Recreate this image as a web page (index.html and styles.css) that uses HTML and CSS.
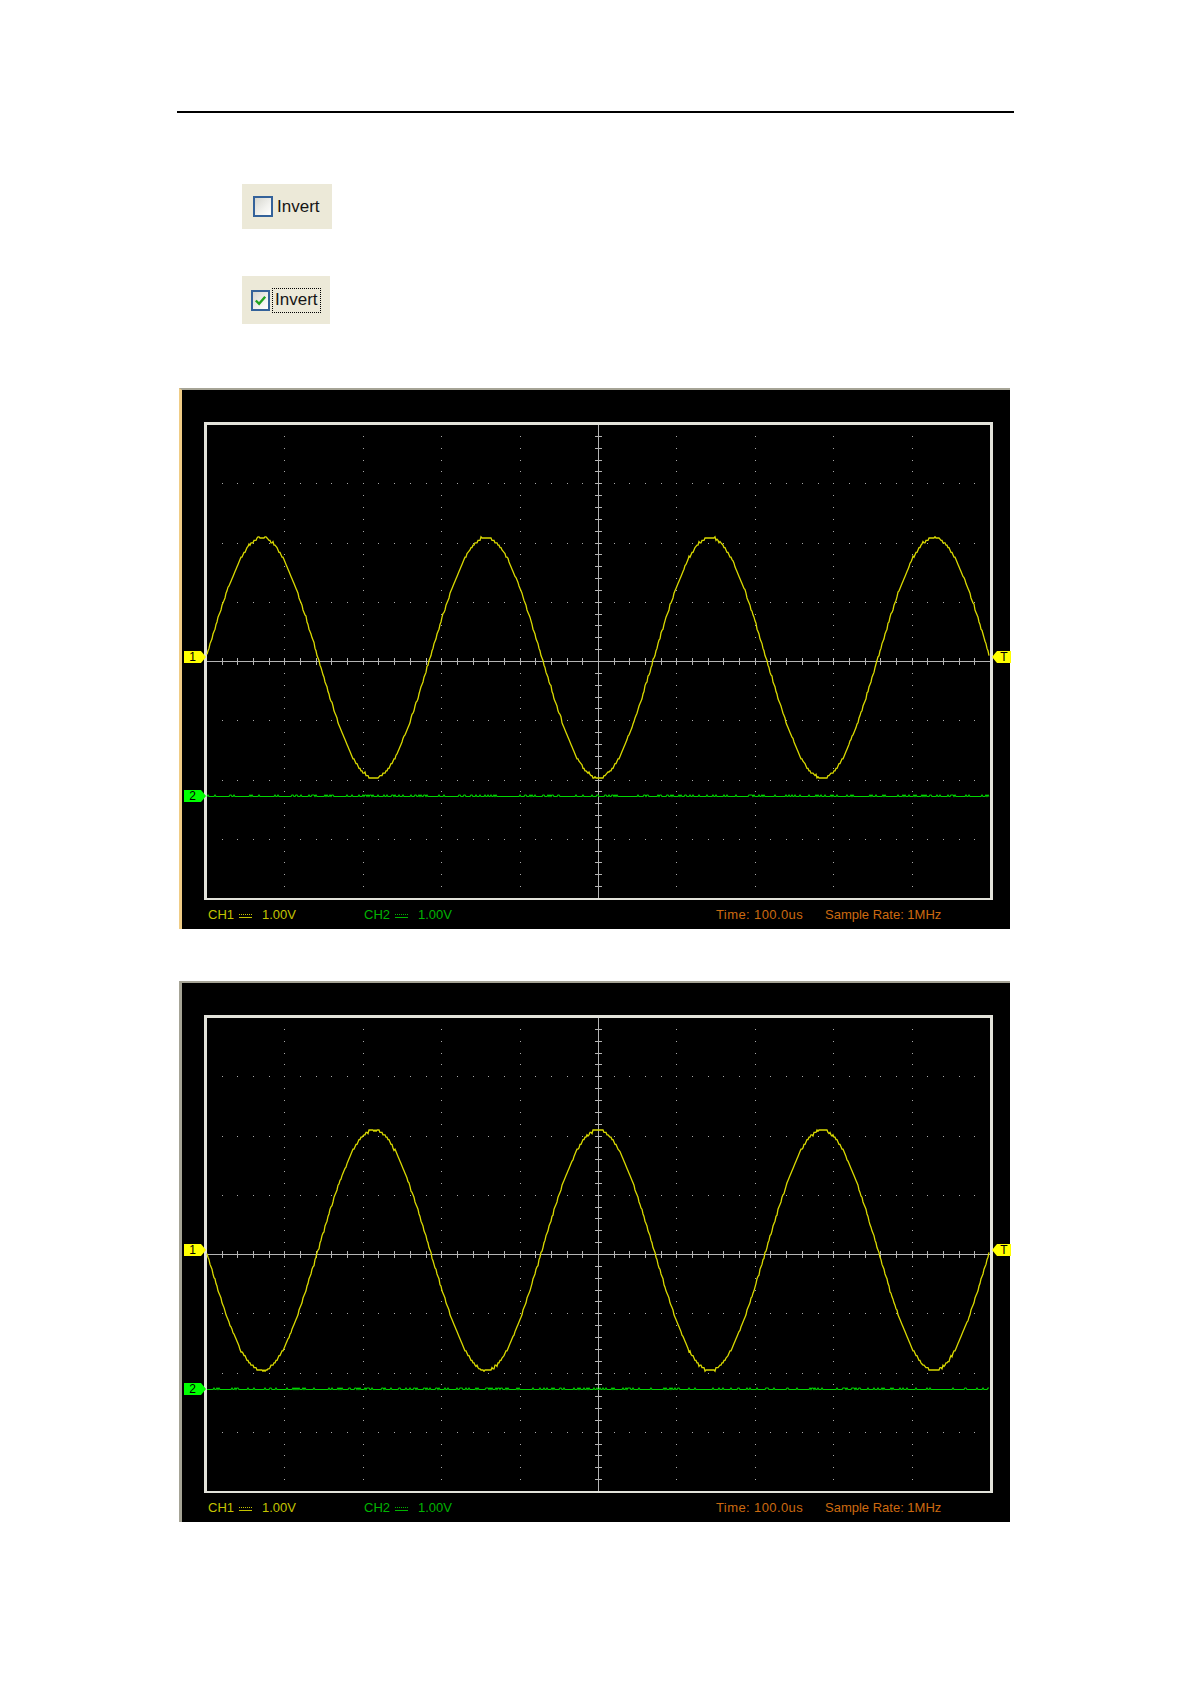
FILE: index.html
```html
<!DOCTYPE html>
<html lang="en">
<head>
    <meta charset="UTF-8">
    <title>Invert</title>
    <link rel="stylesheet" href="styles.css">
</head>
<body>
    <div class="page">
        <div class="rule"></div>

        <div class="cb-shot cb-off">
            <span class="cb-box"></span>
            <span class="cb-label">Invert</span>
        </div>

        <div class="cb-shot cb-on">
            <span class="cb-box">
                <svg width="16" height="17" viewBox="0 0 16 17"><path d="M3 8.5 L6.5 12 L13 4.5" fill="none" stroke="#22a322" stroke-width="2.6"/></svg>
            </span>
            <span class="cb-label focus">Invert</span>
        </div>

        <div class="scope scope-first" data-invert="0" data-center="268">
            <svg class="screen" width="828" height="510"></svg>
            <span class="marker marker-1">1</span>
            <span class="marker marker-2">2</span>
            <span class="marker marker-t">T</span>
            <div class="readout">
                <span class="ch ch1">CH1<i class="dc"></i>1.00V</span>
                <span class="ch ch2">CH2<i class="dc"></i>1.00V</span>
                <span class="info time">Time: 100.0us</span>
                <span class="info">Sample Rate: 1MHz</span>
            </div>
        </div>

        <div class="scope" data-invert="1" data-center="267">
            <svg class="screen" width="828" height="510"></svg>
            <span class="marker marker-1">1</span>
            <span class="marker marker-2">2</span>
            <span class="marker marker-t">T</span>
            <div class="readout">
                <span class="ch ch1">CH1<i class="dc"></i>1.00V</span>
                <span class="ch ch2">CH2<i class="dc"></i>1.00V</span>
                <span class="info time">Time: 100.0us</span>
                <span class="info">Sample Rate: 1MHz</span>
            </div>
        </div>
    </div>

    <script src="script.js"></script>
</body>
</html>
```

FILE: styles.css
```css
* {
    margin: 0;
    padding: 0;
    box-sizing: border-box;
}

body {
    background: #fff;
    font-family: 'Liberation Sans', Arial, sans-serif;
}

.page {
    padding: 111px 0 40px 177px;
}

.rule {
    width: 837px;
    height: 2px;
    background: #000;
}

/* checkbox screenshots */
.cb-shot {
    display: flex;
    align-items: center;
    margin-left: 65px;
    background: #ece9d8;
    font-size: 17px;
    color: #151515;
}

.cb-off {
    width: 90px;
    height: 45px;
    margin-top: 71px;
    padding-left: 11px;
}

.cb-on {
    width: 88px;
    height: 48px;
    margin-top: 47px;
    padding-left: 9px;
}

.cb-box {
    display: flex;
    align-items: center;
    justify-content: center;
    width: 20px;
    height: 21px;
    margin-right: 4px;
    border: 2px solid #34629a;
    background: linear-gradient(135deg, #d6d6cf 0%, #f2f2ee 60%, #ffffff 100%);
}

.cb-on .cb-box {
    width: 19px;
    margin-right: 3px;
}

.focus {
    padding: 1px 2px 2px 2px;
    outline: 1px dotted #000;
    line-height: 20px;
}

/* scope screens */
.scope {
    position: relative;
    width: 831px;
    height: 541px;
    margin: 64px 0 0 2px;
    background: #000;
    border-top: 2px solid #a6a496;
    border-left: 3px solid #a6a496;
}

.scope-first {
    border-left-color: #f0cd86;
}

.scope + .scope {
    margin-top: 52px;
}

.screen {
    display: block;
}

.marker {
    position: absolute;
    height: 12px;
    font-size: 12px;
    line-height: 12px;
    color: #000;
    text-align: center;
}

.marker-1,
.marker-2 {
    left: 2px;
    width: 22px;
    padding-right: 5px;
    clip-path: polygon(0 0, 17px 0, 22px 50%, 17px 100%, 0 100%);
}

.marker-1 {
    top: 261px;
    background: #ffff00;
}

.marker-2 {
    top: 400px;
    background: #00ff00;
}

.marker-t {
    top: 261px;
    left: 810px;
    width: 19px;
    padding-left: 5px;
    background: #ffff00;
    clip-path: polygon(5px 0, 100% 0, 100% 100%, 5px 100%, 0 50%);
}

.readout {
    display: flex;
    align-items: center;
    height: 29px;
    padding-left: 26px;
    font-size: 13px;
    white-space: nowrap;
}

.ch {
    display: flex;
    align-items: center;
}

.ch1 {
    width: 156px;
    color: #c4c400;
}

.ch2 {
    width: 352px;
    color: #00b400;
}

.info {
    color: #cc6a10;
}

.time {
    width: 109px;
    letter-spacing: 0.4px;
}

.dc {
    display: inline-block;
    width: 13px;
    height: 4px;
    margin: 2px 10px 0 5px;
    border-top: 1px dotted currentColor;
    border-bottom: 1px solid currentColor;
}
```

FILE: script.js
```js
var NS = 'http://www.w3.org/2000/svg';

var X0 = 24, X1 = 808, Y0 = 34, Y1 = 508;
var DX = (X1 - X0) / 10;
var DY = (Y1 - Y0) / 8;
var CX = X0 + 5 * DX;
var CY = Y0 + 4 * DY;

function add(svg, tag, attrs) {
    var el = document.createElementNS(NS, tag);
    for (var k in attrs) el.setAttribute(k, attrs[k]);
    svg.appendChild(el);
    return el;
}

function random(seed) {
    return function () {
        seed = (seed * 16807) % 2147483647;
        return seed / 2147483647;
    };
}

function dot(svg, x, y, w, h, color) {
    add(svg, 'rect', {
        x: Math.round(x - (w - 1) / 2), y: Math.round(y - (h - 1) / 2),
        width: w, height: h, fill: color
    });
}

function drawGrid(svg) {
    var g = add(svg, 'g', { 'shape-rendering': 'crispEdges' });
    var i, j;

    // dotted divisions
    for (i = 1; i < 10; i++) {
        if (i == 5) continue;
        for (j = 1; j < 40; j++) dot(g, X0 + i * DX, Y0 + j * DY / 5, 1, 1, '#a8a8a8');
    }
    for (i = 1; i < 8; i++) {
        if (i == 4) continue;
        for (j = 1; j < 50; j++) dot(g, X0 + j * DX / 5, Y0 + i * DY, 1, 1, '#a8a8a8');
    }

    // centre axes with minor ticks
    add(g, 'rect', { x: X0, y: Math.round(CY), width: X1 - X0, height: 1, fill: '#b4b4b4' });
    add(g, 'rect', { x: Math.round(CX), y: Y0, width: 1, height: Y1 - Y0, fill: '#b4b4b4' });
    for (j = 1; j < 50; j++) dot(g, X0 + j * DX / 5, CY, 1, 7, '#b4b4b4');
    for (j = 1; j < 40; j++) dot(g, CX, Y0 + j * DY / 5, 7, 1, '#b4b4b4');

    // frame
    add(g, 'rect', {
        x: X0 - 1, y: Y0 - 1, width: X1 - X0 + 2, height: Y1 - Y0 + 2,
        fill: 'none', stroke: '#e2e2da', 'stroke-width': 3
    });
}

function drawTraces(svg, invert, center, rnd) {
    var P = (X1 - X0) / 3.5;
    var A = 120;
    var sine = [], flat = [];
    var x, v, y;

    for (x = X0 + 1; x <= X1 - 1; x++) {
        v = A * Math.sin(2 * Math.PI * (x - X0) / P);
        v = Math.round(v / 2.4) * 2.4;
        if (rnd() < 0.12) v += 1.2;
        y = invert ? center + v : center - v;
        sine.push(x + ',' + y.toFixed(1));

        y = 406.5;
        if (rnd() < 0.22) y -= 1.5;
        flat.push(x + ',' + y);
    }

    add(svg, 'polyline', {
        points: flat.join(' '), fill: 'none', stroke: '#00d400', 'stroke-width': 1.2
    });
    add(svg, 'polyline', {
        points: sine.join(' '), fill: 'none', stroke: '#dada00', 'stroke-width': 1.3
    });
}

var scopes = document.querySelectorAll('.scope');
for (var i = 0; i < scopes.length; i++) {
    var svg = scopes[i].querySelector('.screen');
    drawGrid(svg);
    drawTraces(svg, scopes[i].dataset.invert == '1', parseFloat(scopes[i].dataset.center), random(7 + i * 31));
}
```
